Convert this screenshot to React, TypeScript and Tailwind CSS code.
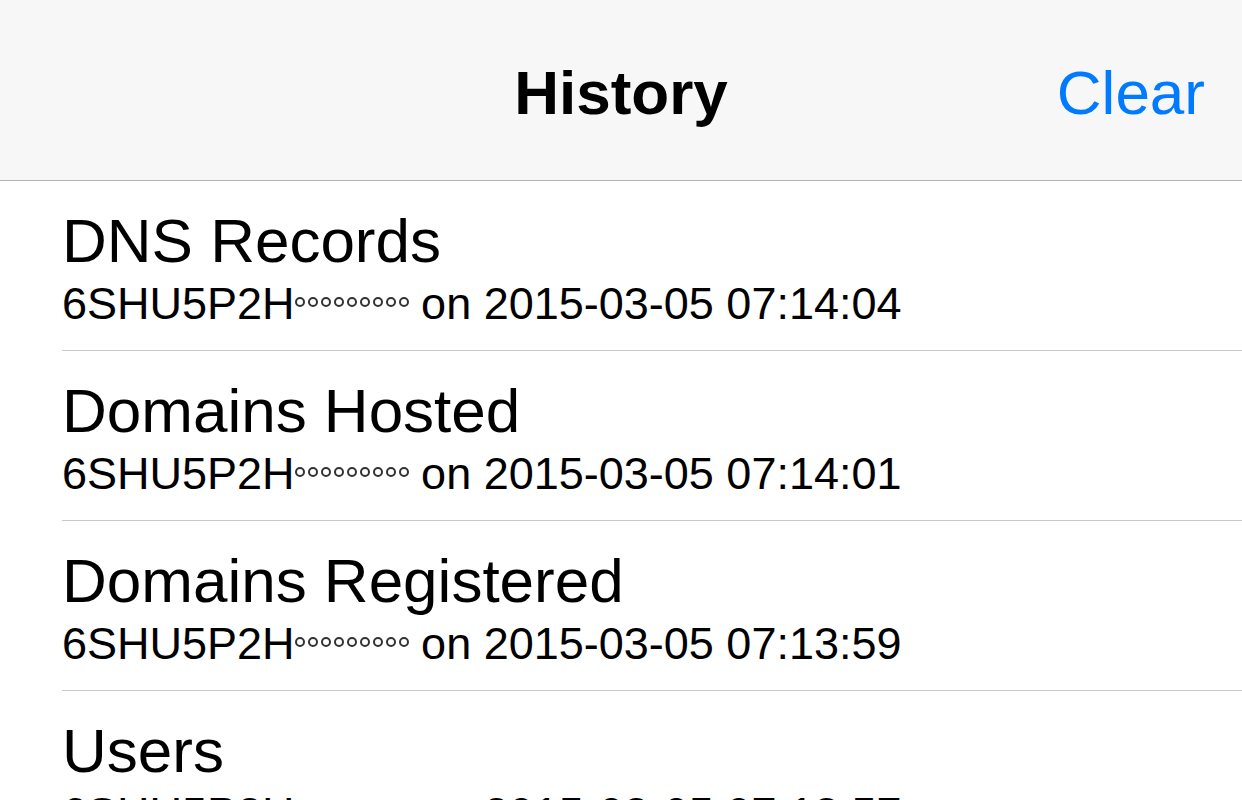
import React from "react";

const rows = [
  { title: "DNS Records", time: "2015-03-05 07:14:04" },
  { title: "Domains Hosted", time: "2015-03-05 07:14:01" },
  { title: "Domains Registered", time: "2015-03-05 07:13:59" },
  { title: "Users", time: "2015-03-05 07:13:57" },
];

function Dots() {
  const items = [0, 1, 2, 3, 4, 5, 6, 7, 8];
  return (
    <>
      {items.map((i) => (
        <span
          key={i}
          className={
            "inline-block w-[10px] h-[10px] rounded-full border-2 border-[#333] mb-[12px] align-baseline " +
            (i < 8 ? "mr-[3px]" : "")
          }
        />
      ))}
    </>
  );
}

export default function App() {
  return (
    <div
      className="w-[1242px] h-[800px] overflow-hidden bg-white text-black"
      style={{ fontFamily: '"Liberation Sans", Arial, Helvetica, sans-serif' }}
    >
      <div className="h-[181px] bg-[#f7f7f7] border-b border-[#b2b2b2] grid grid-cols-[1fr_auto_1fr] pt-[62px]">
        <div />
        <div className="text-[62px] leading-[62px] font-bold">History</div>
        <div className="text-[62px] leading-[62px] text-[#007aff] text-right pr-[37px]">Clear</div>
      </div>
      <div className="flex flex-col">
        {rows.map((r) => (
          <div key={r.title} className="pl-[62px]">
            <div className="border-b border-[#c8c7cc] pt-[29px] pb-[24px] h-[170px]">
              <div className="text-[62px] leading-[62px] whitespace-nowrap">{r.title}</div>
              <div className="text-[45px] leading-[45px] mt-[9px] whitespace-nowrap">
                6SHU5P2H
                <Dots /> on {r.time}
              </div>
            </div>
          </div>
        ))}
      </div>
    </div>
  );
}
